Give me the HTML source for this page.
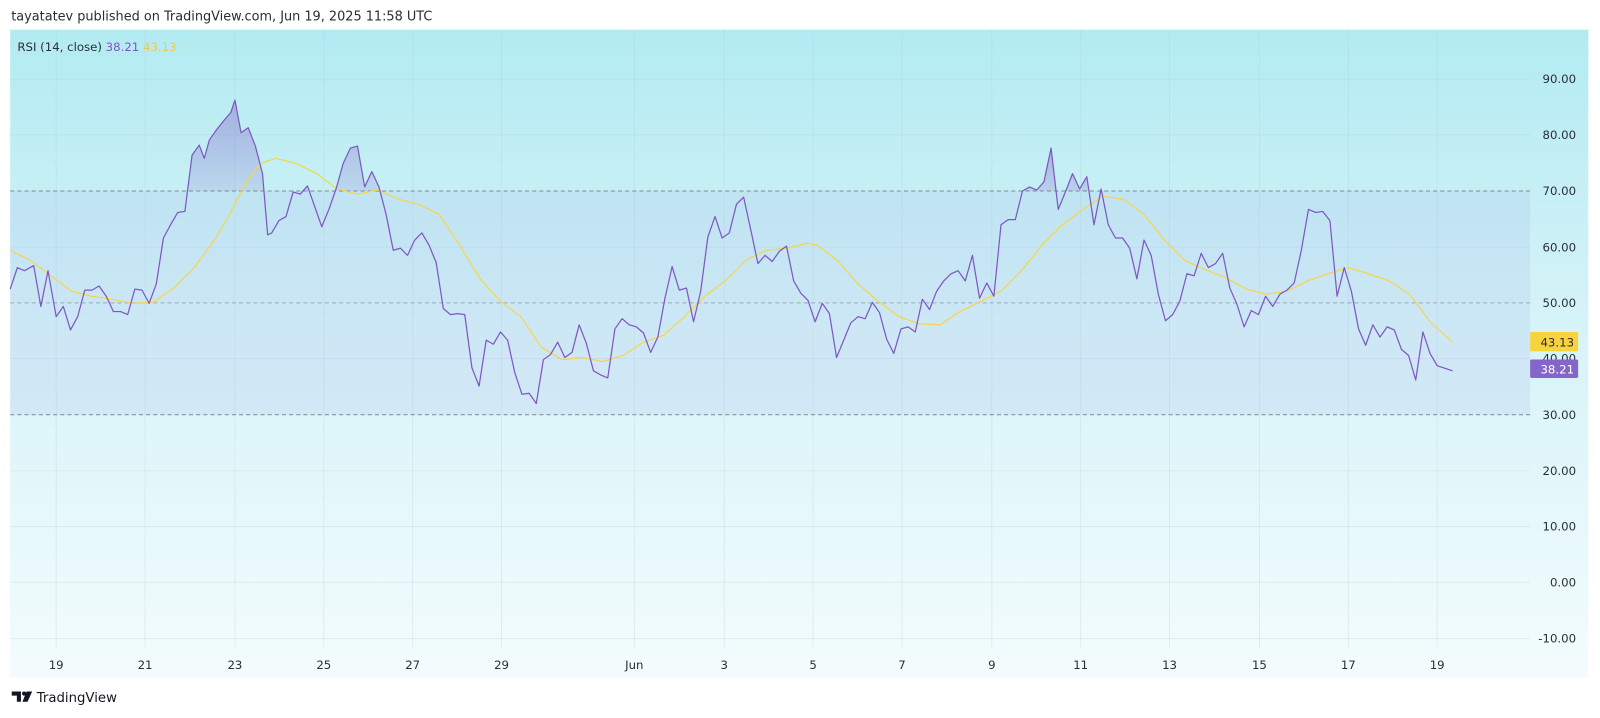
<!DOCTYPE html>
<html><head><meta charset="utf-8"><style>
html,body{margin:0;padding:0;background:#fff;width:1600px;height:718px;overflow:hidden}
svg{display:block}
text{font-family:"DejaVu Sans","Liberation Sans",sans-serif}
</style></head><body>
<svg width="1600" height="718" viewBox="0 0 1566.4 702.9" xmlns="http://www.w3.org/2000/svg">
<defs>
<linearGradient id="bg" x1="0" y1="0" x2="0" y2="1">
<stop offset="0" stop-color="#b2ebf2"/><stop offset="0.45" stop-color="#d6f3f8"/><stop offset="1" stop-color="#f3fcfd"/>
</linearGradient>
<linearGradient id="pf" x1="0" y1="0" x2="0" y2="1">
<stop offset="0" stop-color="#7e57c2" stop-opacity="0.4"/><stop offset="1" stop-color="#7e57c2" stop-opacity="0.03"/>
</linearGradient>
<clipPath id="ob"><rect x="10" y="29" width="1488" height="158"/></clipPath>
</defs>
<text x="11" y="20" font-size="12.6" fill="#2a2e39">tayatatev published on TradingView.com, Jun 19, 2025 11:58 UTC</text>
<rect x="10" y="29" width="1545" height="634" fill="url(#bg)"/>
<rect x="10" y="187" width="1488" height="219" fill="#9aa6e6" fill-opacity="0.16"/>
<g stroke="#a9c6d2" stroke-opacity="0.3" stroke-width="0.8">
<line x1="10" x2="1498" y1="77.5" y2="77.5"/><line x1="10" x2="1498" y1="132" y2="132"/>
<line x1="10" x2="1498" y1="242" y2="242"/><line x1="10" x2="1498" y1="351" y2="351"/>
<line x1="10" x2="1498" y1="461" y2="461"/><line x1="10" x2="1498" y1="515.5" y2="515.5"/>
<line x1="10" x2="1498" y1="570" y2="570"/><line x1="10" x2="1498" y1="625" y2="625"/>
<line x1="55" x2="55" y1="29" y2="634"/><line x1="142" x2="142" y1="29" y2="634"/><line x1="230" x2="230" y1="29" y2="634"/><line x1="317" x2="317" y1="29" y2="634"/><line x1="404" x2="404" y1="29" y2="634"/><line x1="491" x2="491" y1="29" y2="634"/><line x1="621" x2="621" y1="29" y2="634"/><line x1="709" x2="709" y1="29" y2="634"/><line x1="796" x2="796" y1="29" y2="634"/><line x1="883" x2="883" y1="29" y2="634"/><line x1="971" x2="971" y1="29" y2="634"/><line x1="1058" x2="1058" y1="29" y2="634"/><line x1="1145" x2="1145" y1="29" y2="634"/><line x1="1233" x2="1233" y1="29" y2="634"/><line x1="1320" x2="1320" y1="29" y2="634"/><line x1="1407" x2="1407" y1="29" y2="634"/>
</g>
<g stroke="#888" stroke-width="1" stroke-dasharray="4,3">
<line x1="10" x2="1498" y1="187" y2="187"/><line x1="10" x2="1498" y1="296.5" y2="296.5" stroke="#9aaab8"/><line x1="10" x2="1498" y1="406" y2="406"/>
</g>
<polygon clip-path="url(#ob)" fill="url(#pf)" points="160,233 167,220 174,208 181,207 188,152 195,142 200,155 205,137 212,127 220,117 226,110 230,98 236,130 243,125 250,143 257,170 262,230 266,228 273,216 280,212 287,188 294,190 301,182 308,202 315,222 322,205 329,185 336,160 343,145 350,143 357,183 364,168 371,183 378,210 378,230 160,230"/>
<polygon clip-path="url(#ob)" fill="url(#pf)" points="1001,187 1008,183 1015,186 1022,178 1029,145 1036,205 1043,188 1050,170 1057,185 1064,173 1071,220 1078,185 1085,220 1001,220"/>
<polyline fill="none" stroke="#f7d54a" stroke-width="1.2" points="10,245 30,255 50,270 70,285 90,290 110,293 130,297 150,296 170,282 190,262 210,235 225,210 240,180 255,160 270,155 290,160 310,170 330,185 350,190 370,186 390,195 410,200 430,210 450,240 470,273 490,295 510,310 530,340 550,352 570,350 590,354 610,348 630,335 650,328 670,310 690,290 710,275 730,255 750,245 770,243 790,238 800,240 820,255 840,278 860,295 880,310 900,317 920,318 940,305 960,295 980,285 1000,265 1020,240 1040,220 1060,205 1080,192 1100,195 1120,210 1140,235 1160,255 1180,264 1200,272 1220,283 1240,288 1260,285 1280,275 1300,268 1320,262 1340,268 1360,275 1380,288 1400,315 1422,335"/>
<polyline fill="none" stroke="#7e57c2" stroke-width="1.2" stroke-linejoin="round" points="10,283 17,262 24,265 33,260 40,300 47,265 55,310 62,300 69,323 76,310 83,284 90,284 97,280 104,290 111,305 118,305 125,308 132,283 139,284 146,297 153,278 160,233 167,220 174,208 181,207 188,152 195,142 200,155 205,137 212,127 220,117 226,110 230,98 236,130 243,125 250,143 257,170 262,230 266,228 273,216 280,212 287,188 294,190 301,182 308,202 315,222 322,205 329,185 336,160 343,145 350,143 357,183 364,168 371,183 378,210 385,245 392,243 399,250 406,235 413,228 420,240 427,257 434,302 441,308 448,307 455,308 462,360 469,378 476,333 483,337 490,325 497,333 504,365 511,386 518,385 525,395 532,352 539,347 546,335 553,350 560,345 567,318 574,336 581,363 588,367 595,370 602,322 609,312 616,318 623,320 630,326 637,345 644,330 651,292 658,261 665,284 672,282 679,315 686,285 693,232 700,212 707,233 714,228 721,200 728,193 735,225 742,258 749,250 756,256 763,246 770,241 777,275 784,287 791,294 798,315 805,297 812,307 819,350 826,333 833,316 840,310 847,312 854,296 861,306 868,332 875,346 882,322 889,320 896,325 903,293 910,303 917,285 924,275 931,268 938,265 945,275 952,250 959,292 966,277 973,290 980,220 987,215 994,215 1001,187 1008,183 1015,186 1022,178 1029,145 1036,205 1043,188 1050,170 1057,185 1064,173 1071,220 1078,185 1085,220 1092,233 1099,233 1106,243 1113,273 1120,235 1127,250 1134,288 1141,314 1148,308 1155,295 1162,268 1169,270 1176,248 1183,262 1190,258 1197,248 1204,282 1211,298 1218,320 1225,304 1232,308 1239,290 1246,300 1253,288 1260,284 1267,277 1274,245 1281,205 1288,208 1295,207 1302,216 1309,290 1316,262 1323,285 1330,322 1337,338 1344,318 1351,330 1358,320 1365,323 1372,342 1379,348 1386,372 1393,325 1400,346 1407,358 1422,363"/>
<text x="17" y="50" font-size="11.5" fill="#2a2e39">RSI (14, close) <tspan fill="#7e57c2">38.21</tspan> <tspan fill="#f2c94c">43.13</tspan></text>
<g font-size="11.5" fill="#2a2e39" text-anchor="end">
<text x="1543" y="81.5">90.00</text><text x="1543" y="136">80.00</text><text x="1543" y="191">70.00</text><text x="1543" y="246">60.00</text><text x="1543" y="300.5">50.00</text><text x="1543" y="355">40.00</text><text x="1543" y="410">30.00</text><text x="1543" y="465">20.00</text><text x="1543" y="519.5">10.00</text><text x="1543" y="574">0.00</text><text x="1543" y="629">-10.00</text>
</g>
<rect x="1498" y="325" width="47" height="19" rx="1.5" fill="#f7d33e"/>
<text x="1541" y="339" font-size="11.5" fill="#2a2e39" text-anchor="end">43.13</text>
<rect x="1498" y="352" width="47" height="18" rx="1.5" fill="#8466c8"/>
<text x="1541" y="365.5" font-size="11.5" fill="#fff" text-anchor="end">38.21</text>
<g font-size="11.5" fill="#2a2e39" text-anchor="middle">
<text x="55" y="655">19</text><text x="142" y="655">21</text><text x="230" y="655">23</text><text x="317" y="655">25</text><text x="404" y="655">27</text><text x="491" y="655">29</text><text x="621" y="655">Jun</text><text x="709" y="655">3</text><text x="796" y="655">5</text><text x="883" y="655">7</text><text x="971" y="655">9</text><text x="1058" y="655">11</text><text x="1145" y="655">13</text><text x="1233" y="655">15</text><text x="1320" y="655">17</text><text x="1407" y="655">19</text>
</g>
<g fill="#131722">
<path d="M11.5,677h9v10h-4v-6h-5z"/><circle cx="23.6" cy="679" r="2"/><path d="M26,677h5.5l-4.5,10h-5z"/>
</g>
<text x="36" y="687.5" font-size="13" fill="#131722">TradingView</text>
</svg>
</body></html>
